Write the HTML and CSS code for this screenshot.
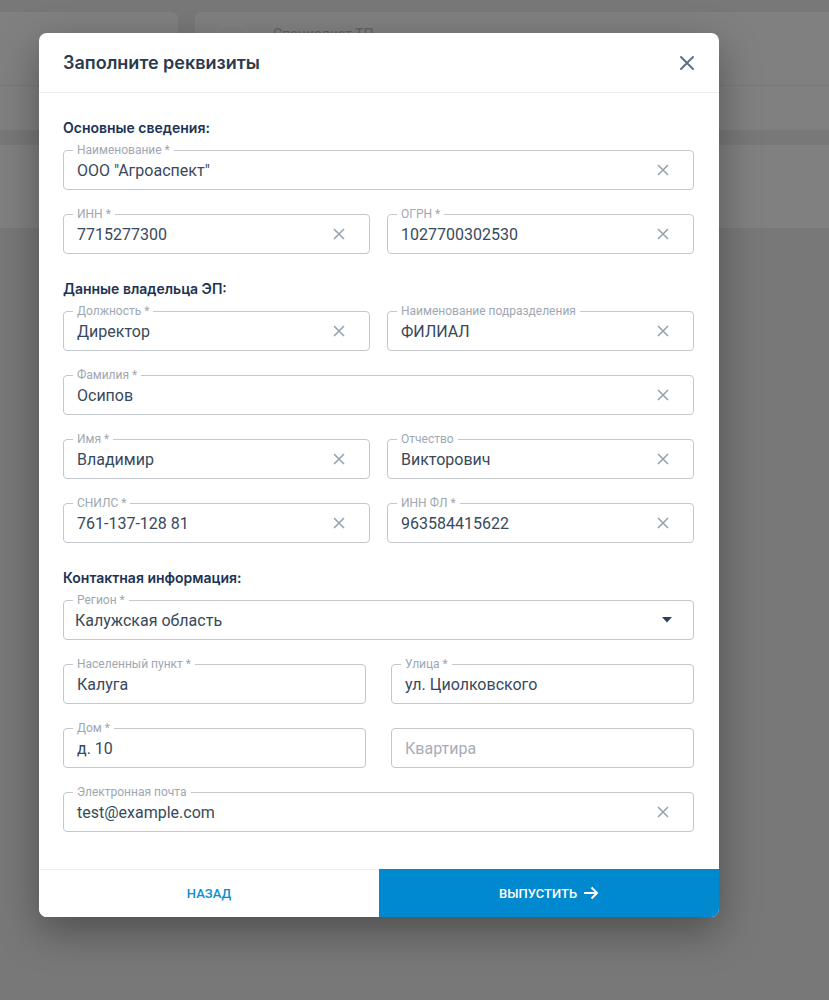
FILE: index.html
```html
<!DOCTYPE html>
<html lang="ru">
<head>
    <meta charset="UTF-8">
    <meta name="viewport" content="width=device-width, initial-scale=1.0">
    <title>Заполните реквизиты</title>
    <link rel="stylesheet" href="styles.css">
</head>
<body>
    <!-- Page behind the overlay -->
    <div class="page">
        <div class="top-row">
            <div class="card card-left"></div>
            <div class="card card-right">
                <div class="avatar"></div>
                <div class="role">Специалист ТП</div>
            </div>
        </div>
        <div class="panel panel-one"></div>
        <div class="panel panel-two"></div>
    </div>

    <!-- Modal -->
    <div class="modal">
        <div class="modal-header">
            <h2>Заполните реквизиты</h2>
            <svg class="close" width="16" height="16" viewBox="0 0 16 16"><path d="M2 2L14 14M14 2L2 14" stroke="#5d7182" stroke-width="2" stroke-linecap="round"/></svg>
        </div>

        <div class="modal-body">
            <div class="section">
                <h3>Основные сведения:</h3>
                <div class="field">
                    <label>Наименование *</label>
                    <span class="value">ООО "Агроаспект"</span>
                    <svg class="clear" width="12" height="12" viewBox="0 0 12 12"><path d="M1 1L11 11M11 1L1 11" stroke="#98a2ac" stroke-width="1.6"/></svg>
                </div>
                <div class="row">
                    <div class="field">
                        <label>ИНН *</label>
                        <span class="value">7715277300</span>
                        <svg class="clear" width="12" height="12" viewBox="0 0 12 12"><path d="M1 1L11 11M11 1L1 11" stroke="#98a2ac" stroke-width="1.6"/></svg>
                    </div>
                    <div class="field">
                        <label>ОГРН *</label>
                        <span class="value">1027700302530</span>
                        <svg class="clear" width="12" height="12" viewBox="0 0 12 12"><path d="M1 1L11 11M11 1L1 11" stroke="#98a2ac" stroke-width="1.6"/></svg>
                    </div>
                </div>
            </div>

            <div class="section">
                <h3>Данные владельца ЭП:</h3>
                <div class="row">
                    <div class="field">
                        <label>Должность *</label>
                        <span class="value">Директор</span>
                        <svg class="clear" width="12" height="12" viewBox="0 0 12 12"><path d="M1 1L11 11M11 1L1 11" stroke="#98a2ac" stroke-width="1.6"/></svg>
                    </div>
                    <div class="field">
                        <label>Наименование подразделения</label>
                        <span class="value">ФИЛИАЛ</span>
                        <svg class="clear" width="12" height="12" viewBox="0 0 12 12"><path d="M1 1L11 11M11 1L1 11" stroke="#98a2ac" stroke-width="1.6"/></svg>
                    </div>
                </div>
                <div class="field">
                    <label>Фамилия *</label>
                    <span class="value">Осипов</span>
                    <svg class="clear" width="12" height="12" viewBox="0 0 12 12"><path d="M1 1L11 11M11 1L1 11" stroke="#98a2ac" stroke-width="1.6"/></svg>
                </div>
                <div class="row">
                    <div class="field">
                        <label>Имя *</label>
                        <span class="value">Владимир</span>
                        <svg class="clear" width="12" height="12" viewBox="0 0 12 12"><path d="M1 1L11 11M11 1L1 11" stroke="#98a2ac" stroke-width="1.6"/></svg>
                    </div>
                    <div class="field">
                        <label>Отчество</label>
                        <span class="value">Викторович</span>
                        <svg class="clear" width="12" height="12" viewBox="0 0 12 12"><path d="M1 1L11 11M11 1L1 11" stroke="#98a2ac" stroke-width="1.6"/></svg>
                    </div>
                </div>
                <div class="row">
                    <div class="field">
                        <label>СНИЛС *</label>
                        <span class="value">761-137-128 81</span>
                        <svg class="clear" width="12" height="12" viewBox="0 0 12 12"><path d="M1 1L11 11M11 1L1 11" stroke="#98a2ac" stroke-width="1.6"/></svg>
                    </div>
                    <div class="field">
                        <label>ИНН ФЛ *</label>
                        <span class="value">963584415622</span>
                        <svg class="clear" width="12" height="12" viewBox="0 0 12 12"><path d="M1 1L11 11M11 1L1 11" stroke="#98a2ac" stroke-width="1.6"/></svg>
                    </div>
                </div>
            </div>

            <div class="section">
                <h3>Контактная информация:</h3>
                <div class="field select">
                    <label>Регион *</label>
                    <span class="value">Калужская область</span>
                    <svg class="arrow" width="10" height="6" viewBox="0 0 10 6"><path d="M0 0H10L5 5.5Z" fill="#2a4460"/></svg>
                </div>
                <div class="row wide">
                    <div class="field">
                        <label>Населенный пункт *</label>
                        <span class="value">Калуга</span>
                    </div>
                    <div class="field">
                        <label>Улица *</label>
                        <span class="value">ул. Циолковского</span>
                    </div>
                </div>
                <div class="row wide">
                    <div class="field">
                        <label>Дом *</label>
                        <span class="value">д. 10</span>
                    </div>
                    <div class="field">
                        <span class="value placeholder">Квартира</span>
                    </div>
                </div>
                <div class="field">
                    <label>Электронная почта</label>
                    <span class="value">test@example.com</span>
                    <svg class="clear" width="12" height="12" viewBox="0 0 12 12"><path d="M1 1L11 11M11 1L1 11" stroke="#98a2ac" stroke-width="1.6"/></svg>
                </div>
            </div>
        </div>

        <div class="modal-footer">
            <button class="btn-back">НАЗАД</button>
            <button class="btn-submit">ВЫПУСТИТЬ
                <svg width="16" height="14" viewBox="0 0 16 14"><path d="M1 7H14M8.5 1.5L14 7L8.5 12.5" stroke="#fff" stroke-width="2" fill="none"/></svg>
            </button>
        </div>
    </div>
</body>
</html>
```

FILE: styles.css
```css
body {
    margin: 0;
    background-color: #777877;
    font-family: Roboto, "Liberation Sans", sans-serif;
    height: 1000px;
    overflow: hidden;
}
.page {
    padding-top: 12px;
}
.top-row {
    display: flex;
    gap: 17px;
    height: 73px;
}
.card {
    background: #7f807f;
    border-radius: 6px;
}
.card-left {
    width: 190px;
    margin-left: -12px;
}
.card-right {
    flex: 1;
    margin-right: -20px;
    display: flex;
    align-items: flex-start;
    padding: 12px 16px;
}
.avatar {
    width: 40px;
    height: 40px;
    border-radius: 50%;
    border: 1px solid #868786;
    margin-right: 20px;
}
.role {
    margin-top: 2px;
    color: #5f6266;
    font-size: 14px;
}
.panel {
    background: #7f807f;
}
.panel-one {
    height: 44px;
    border-top: 1px solid #777877;
    margin-bottom: 15px;
}
.panel-two {
    height: 83px;
}
.modal {
    position: absolute;
    top: 33px;
    left: 39px;
    width: 680px;
    background: #fff;
    border-radius: 8px;
    overflow: hidden;
    box-shadow: 0 14px 40px rgba(0,0,0,0.35);
}
.modal-header {
    height: 59px;
    display: flex;
    align-items: center;
    justify-content: space-between;
    padding: 0 24px 0 24px;
    border-bottom: 1px solid #eceef1;
}
.modal-header h2 {
    margin: 0;
    font-family: Inter, sans-serif;
    font-size: 18px;
    font-weight: 600;
    color: #2b3b4d;
}
.modal-body {
    padding: 26px 25px 37px 24px;
}
.section + .section {
    margin-top: 26px;
}
.section h3 {
    margin: 0 0 13px;
    font-family: Inter, sans-serif;
    font-size: 14px;
    line-height: 18px;
    font-weight: 600;
    color: #1c3354;
}
.section > * + .field,
.section > * + .row {
    margin-top: 24px;
}
.section > h3 + .field,
.section > h3 + .row {
    margin-top: 0;
}
.row {
    display: grid;
    grid-template-columns: 1fr 1fr;
    gap: 17px;
}
.row.wide {
    gap: 25px;
}
.field {
    position: relative;
    height: 40px;
    border: 1px solid #c4c7cc;
    border-radius: 4px;
    box-sizing: border-box;
    display: flex;
    align-items: center;
    padding: 0 24px 0 13px;
}
.field label {
    position: absolute;
    top: -8px;
    left: 9px;
    padding: 0 4px;
    background: #fff;
    font-size: 12px;
    line-height: 14px;
    color: #9ea7b2;
}
.field .value {
    flex: 1;
    font-size: 16px;
    color: #38495b;
}
.field .value.placeholder {
    color: #a6aeb8;
}
.field.select {
    padding: 0 21px 0 11px;
}
.field .clear {
    flex-shrink: 0;
}
.modal-footer {
    display: flex;
    height: 48px;
}
.modal-footer button {
    flex: 1;
    border: none;
    font-family: Roboto, sans-serif;
    font-size: 13px;
    font-weight: 500;
    cursor: pointer;
    display: flex;
    align-items: center;
    justify-content: center;
    gap: 6px;
}
.btn-back {
    background: #fff;
    color: #0a8fd0;
    border-top: 1px solid #eceef1 !important;
}
.btn-submit {
    background: #0089cf;
    color: #fff;
}
```
